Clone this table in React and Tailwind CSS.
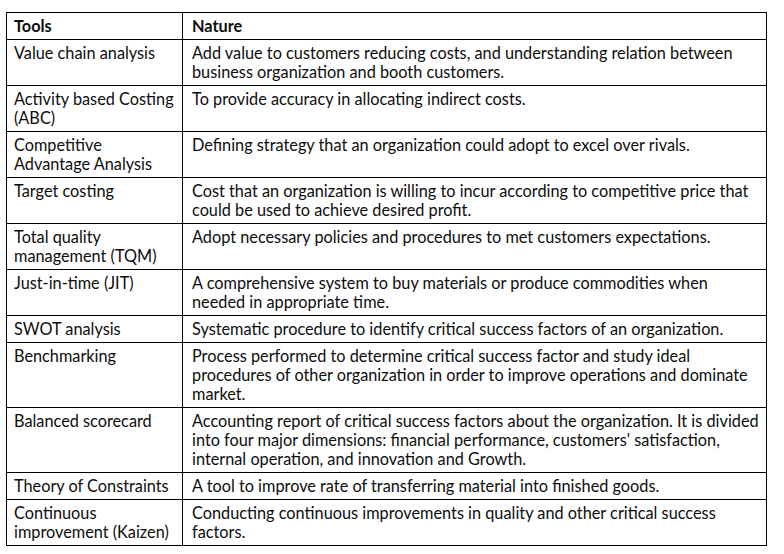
const rows = [
  {
    tool: ['Value chain analysis'],
    nature: [
      'Add value to customers reducing costs, and understanding relation between',
      'business organization and booth customers.'
    ]
  },
  {
    tool: ['Activity based Costing', '(ABC)'],
    nature: ['To provide accuracy in allocating indirect costs.']
  },
  {
    tool: ['Competitive', 'Advantage Analysis'],
    nature: ['Defining strategy that an organization could adopt to excel over rivals.']
  },
  {
    tool: ['Target costing'],
    nature: [
      'Cost that an organization is willing to incur according to competitive price that',
      'could be used to achieve desired profit.'
    ]
  },
  {
    tool: ['Total quality', 'management (TQM)'],
    nature: ['Adopt necessary policies and procedures to met customers expectations.']
  },
  {
    tool: ['Just-in-time (JIT)'],
    nature: [
      'A comprehensive system to buy materials or produce commodities when',
      'needed in appropriate time.'
    ]
  },
  {
    tool: ['SWOT analysis'],
    nature: ['Systematic procedure to identify critical success factors of an organization.']
  },
  {
    tool: ['Benchmarking'],
    nature: [
      'Process performed to determine critical success factor and study ideal',
      'procedures of other organization in order to improve operations and dominate',
      'market.'
    ]
  },
  {
    tool: ['Balanced scorecard'],
    nature: [
      'Accounting report of critical success factors about the organization. It is divided',
      "into four major dimensions: financial performance, customers' satisfaction,",
      'internal operation, and innovation and Growth.'
    ]
  },
  {
    tool: ['Theory of Constraints'],
    nature: ['A tool to improve rate of transferring material into finished goods.']
  },
  {
    tool: ['Continuous', 'improvement (Kaizen)'],
    nature: ['Conducting continuous improvements in quality and other critical success', 'factors.']
  }
]

function Lines({ items }) {
  return items.map((line, i) => (
    <div key={i} className="whitespace-nowrap">
      {line}
    </div>
  ))
}

export default function App() {
  return (
    <div className="w-[784px] h-[554px] bg-white pt-[12px] pl-[6px]">
      <table
        className="border-collapse w-[761px] table-fixed text-[16.3px] leading-[19px] text-[#0d0d0d]"
        style={{ fontFamily: 'Lato, "Open Sans", sans-serif' }}
      >
        <colgroup>
          <col className="w-[176px]" />
          <col />
        </colgroup>
        <thead>
          <tr>
            <th className="border border-black text-left font-bold pl-[7px] pt-[3px] pb-[4px] align-top">
              Tools
            </th>
            <th className="border border-black text-left font-bold pl-[9px] pt-[3px] pb-[4px] align-top">
              Nature
            </th>
          </tr>
        </thead>
        <tbody>
          {rows.map((row, i) => (
            <tr key={i}>
              <td className="border border-black pl-[7px] pt-[3px] pb-[4px] align-top">
                <Lines items={row.tool} />
              </td>
              <td className="border border-black pl-[9px] pt-[3px] pb-[4px] align-top">
                <Lines items={row.nature} />
              </td>
            </tr>
          ))}
        </tbody>
      </table>
    </div>
  )
}
